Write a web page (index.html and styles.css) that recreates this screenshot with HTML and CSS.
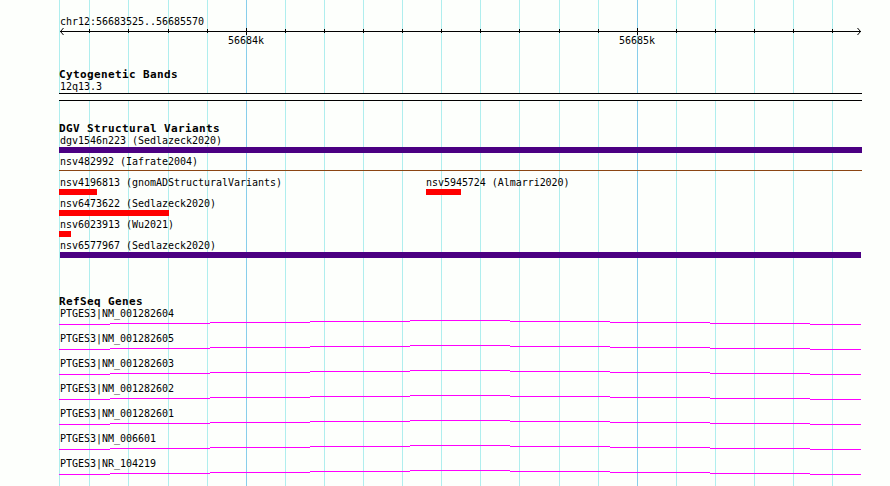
FILE: index.html
```html
<!DOCTYPE html>
<html lang="en">
<head>
<meta charset="UTF-8" />
<meta name="viewport" content="width=device-width, initial-scale=1" />
<title>chr12:56683525..56685570</title>
<link rel="stylesheet" href="styles.css">
</head>
<body>
<main class="browser">
  <!-- grid behind all tracks -->
  <svg class="grid" width="890" height="486" shape-rendering="crispEdges" aria-hidden="true">
    <path class="minor" d="M59.5 0V486M89.5 0V486M128.5 0V486M168.5 0V486M207.5 0V486M285.5 0V486M324.5 0V486M363.5 0V486M402.5 0V486M441.5 0V486M480.5 0V486M519.5 0V486M559.5 0V486M598.5 0V486M676.5 0V486M715.5 0V486M754.5 0V486M793.5 0V486M832.5 0V486" />
    <path class="major" d="M246.5 0V486M637.5 0V486" />
  </svg>

  <section class="ruler">
    <div class="label">chr12:56683525..56685570</div>
    <svg class="scale" width="803" height="7" shape-rendering="crispEdges" aria-hidden="true">
      <path d="M1 3.5H802M30.5 1V5M69.5 1V5M109.5 1V5M148.5 1V5M187.5 0V7M226.5 1V5M265.5 1V5M304.5 1V5M343.5 1V5M382.5 1V5M421.5 1V5M460.5 1V5M500.5 1V5M539.5 1V5M578.5 0V7M617.5 1V5M656.5 1V5M695.5 1V5M734.5 1V5M773.5 1V5" />
      <path shape-rendering="auto" d="M4.5 0L1.5 3.5L4.5 7M798.5 0L801.5 3.5L798.5 7" />
    </svg>
    <div class="ticks">
      <span class="label">56684k</span>
      <span class="label">56685k</span>
    </div>
  </section>

  <section class="track bands">
    <h2>Cytogenetic Bands</h2>
    <div class="label">12q13.3</div>
    <div class="band"></div>
  </section>

  <section class="track variants">
    <h2>DGV Structural Variants</h2>
    <div class="row">
      <div class="variant full"><div class="label">dgv1546n223 (Sedlazeck2020)</div><div class="bar complex"></div></div>
    </div>
    <div class="row">
      <div class="variant full"><div class="label">nsv482992 (Iafrate2004)</div><div class="bar thin"></div></div>
    </div>
    <div class="row">
      <div class="variant first"><div class="label">nsv4196813 (gnomADStructuralVariants)</div><div class="bar loss" style="width: 38px"></div></div>
      <div class="variant second"><div class="label">nsv5945724 (Almarri2020)</div><div class="bar loss" style="width: 35px"></div></div>
    </div>
    <div class="row">
      <div class="variant"><div class="label">nsv6473622 (Sedlazeck2020)</div><div class="bar loss" style="width: 110px"></div></div>
    </div>
    <div class="row">
      <div class="variant"><div class="label">nsv6023913 (Wu2021)</div><div class="bar loss" style="width: 12px"></div></div>
    </div>
    <div class="row">
      <div class="variant full"><div class="label">nsv6577967 (Sedlazeck2020)</div><div class="bar complex inset"></div></div>
    </div>
  </section>

  <section class="track genes">
    <h2>RefSeq Genes</h2>
    <svg width="0" height="0" class="defs" aria-hidden="true">
      <symbol id="intron" viewBox="0 0 802 5">
        <path d="M0 4h51v1H0zM51 3h100v1H51zM151 2h100v1H151zM251 1h100v1H251zM351 0h100v1H351zM451 1h100v1H451zM551 2h100v1H551zM651 3h100v1H651zM751 4h51v1H751z" />
      </symbol>
    </svg>
    <div class="gene"><div class="label">PTGES3|NM_001282604</div><svg class="intron"><use href="#intron" /></svg></div>
    <div class="gene"><div class="label">PTGES3|NM_001282605</div><svg class="intron"><use href="#intron" /></svg></div>
    <div class="gene"><div class="label">PTGES3|NM_001282603</div><svg class="intron"><use href="#intron" /></svg></div>
    <div class="gene"><div class="label">PTGES3|NM_001282602</div><svg class="intron"><use href="#intron" /></svg></div>
    <div class="gene"><div class="label">PTGES3|NM_001282601</div><svg class="intron"><use href="#intron" /></svg></div>
    <div class="gene"><div class="label">PTGES3|NM_006601</div><svg class="intron"><use href="#intron" /></svg></div>
    <div class="gene"><div class="label">PTGES3|NR_104219</div><svg class="intron"><use href="#intron" /></svg></div>
  </section>
</main>
</body>
</html>
```

FILE: styles.css
```css
:root {
  --background-color: #fdfffc;
  --grid-minor: #afeeee;
  --grid-major: #87ceeb;
  --complex-color: #4b0082;
  --loss-color: #ff0000;
  --thin-color: #8b4513;
  --gene-color: #ff00ff;
}

* {
  box-sizing: border-box;
}

body {
  margin: 0;
  background: var(--background-color);
  color: #000;
  font-family: "DejaVu Sans Mono", "Liberation Mono", monospace;
}

.browser {
  position: relative;
  width: 890px;
  height: 486px;
  padding: 16px 28px 0 59px;
  overflow: hidden;
}

.grid {
  position: absolute;
  top: 0;
  left: 0;
  z-index: -1;
}

.grid path {
  fill: none;
  stroke-width: 1;
}

.grid .minor {
  stroke: var(--grid-minor);
}

.grid .major {
  stroke: var(--grid-major);
}

.label {
  height: 12px;
  padding-left: 1px;
  font-size: 10px;
  line-height: 12px;
  letter-spacing: -0.02px;
  white-space: nowrap;
}

h2 {
  height: 12px;
  margin: 0;
  font-size: 11px;
  font-weight: 700;
  line-height: 12px;
  letter-spacing: 0.38px;
  white-space: nowrap;
}

/* ruler */
.ruler {
  height: 53px;
}

.scale {
  display: block;
}

.scale path {
  fill: none;
  stroke: #000;
}

.ticks {
  display: flex;
  gap: 354px;
  padding-left: 168px;
}

.ticks .label {
  width: 37px;
}

/* tracks */
.bands {
  height: 54px;
}

.band {
  width: 803px;
  height: 8px;
  background: var(--background-color);
  border: solid #000;
  border-width: 1px 0;
}

.variants {
  height: 173px;
}

.row {
  display: flex;
  height: 21px;
}

.variant.full {
  width: 803px;
}

.variant.first {
  width: 367px;
}

.variant.second .label {
  padding-left: 0;
  letter-spacing: -0.04px;
}

.bar {
  height: 6px;
}

.bar.complex {
  background: var(--complex-color);
}

.bar.inset {
  margin: 0 1px;
}

.bar.loss {
  background: var(--loss-color);
}

.bar.thin {
  height: 1px;
  margin-top: 2px;
  background: var(--thin-color);
}

.defs {
  display: block;
}

.gene {
  height: 25px;
}

.intron {
  display: block;
  width: 802px;
  height: 5px;
  shape-rendering: crispEdges;
  fill: var(--gene-color);
}
```
